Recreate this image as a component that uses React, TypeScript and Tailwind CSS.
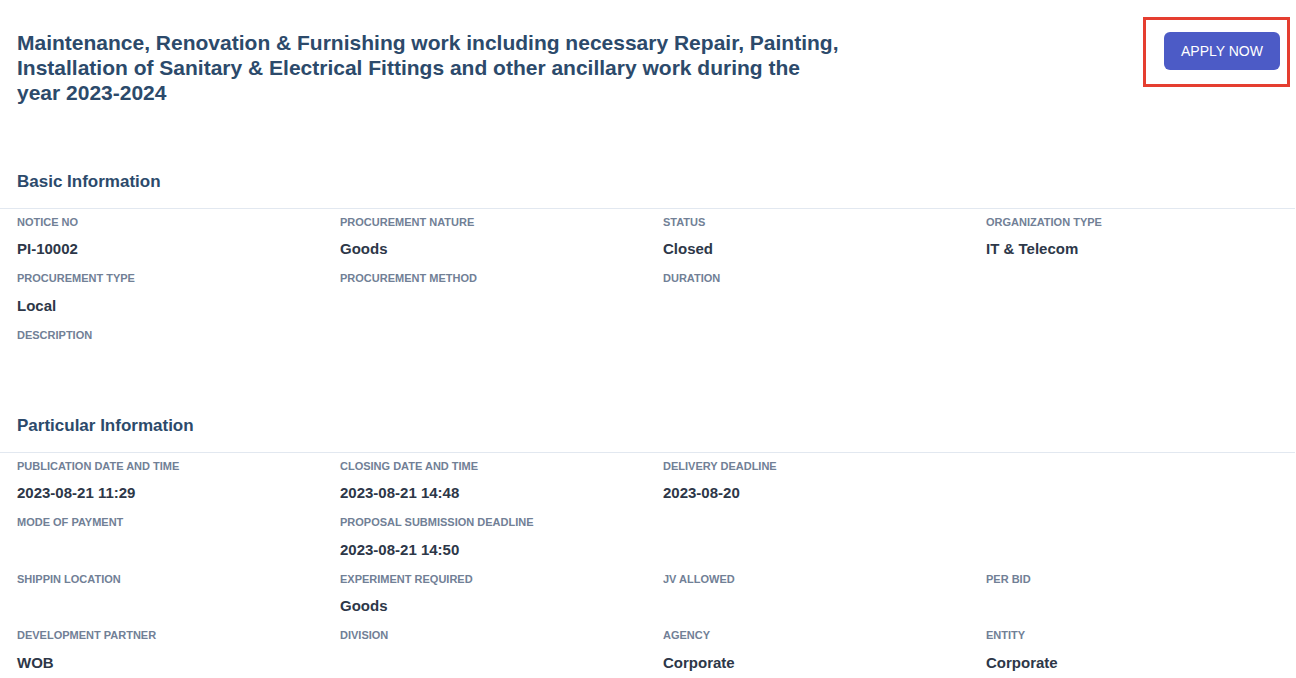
import React from 'react';

type Field = { label: string; value?: string };

const basicInfo: Field[] = [
  { label: 'Notice No', value: 'PI-10002' },
  { label: 'Procurement Nature', value: 'Goods' },
  { label: 'Status', value: 'Closed' },
  { label: 'Organization Type', value: 'IT & Telecom' },
  { label: 'Procurement Type', value: 'Local' },
  { label: 'Procurement Method' },
  { label: 'Duration' },
  { label: '' },
  { label: 'Description' },
];

const particularInfo: Field[] = [
  { label: 'Publication Date and Time', value: '2023-08-21 11:29' },
  { label: 'Closing Date and Time', value: '2023-08-21 14:48' },
  { label: 'Delivery Deadline', value: '2023-08-20' },
  { label: '' },
  { label: 'Mode of Payment' },
  { label: 'Proposal Submission Deadline', value: '2023-08-21 14:50' },
  { label: '' },
  { label: '' },
  { label: 'Shippin Location' },
  { label: 'Experiment Required', value: 'Goods' },
  { label: 'JV Allowed' },
  { label: 'Per Bid' },
  { label: 'Development Partner', value: 'WOB' },
  { label: 'Division' },
  { label: 'Agency', value: 'Corporate' },
  { label: 'Entity', value: 'Corporate' },
];

const InfoSection: React.FC<{ title: string; fields: Field[] }> = ({ title, fields }) => (
  <section>
    <h2 className="px-[17px] pb-[13.5px] text-[17px] leading-[24px] font-bold text-[#2c4a6b]">{title}</h2>
    <div className="w-[1295px] border-t border-[#e2e8f0] pt-[6px]">
      <div className="grid w-[1292px] grid-cols-4">
        {fields.map((f, i) => (
          <div key={i} className="h-[56.5px] px-[17px]">
            {f.label && (
              <>
                <div className="text-[11px] leading-[14px] font-bold uppercase text-[#718096]">{f.label}</div>
                <div className="mt-[10.5px] h-[20px] text-[15px] leading-[20px] font-bold text-[#2d3748]">{f.value}</div>
              </>
            )}
          </div>
        ))}
      </div>
    </div>
  </section>
);

export default function App() {
  return (
    <div className="min-h-screen bg-white font-['Liberation_Sans',Arial,sans-serif]">
      {/* header */}
      <div className="flex items-start justify-between pl-[17px] pr-[16px] pt-[30px]">
        <h1 className="w-[830px] text-[21px] leading-[25px] font-bold text-[#2c4a6b]">
          Maintenance, Renovation &amp; Furnishing work including necessary Repair, Painting, Installation of
          Sanitary &amp; Electrical Fittings and other ancillary work during the year 2023-2024
        </h1>
        <div className="relative mt-[2px]">
          <span className="pointer-events-none absolute -top-[15px] -bottom-[17px] -left-[21px] -right-[10px] border-[3px] border-[#e53e30]" />
          <button className="h-[38px] w-[116px] rounded-md bg-[#4c5bc6] text-[14px] text-white">APPLY NOW</button>
        </div>
      </div>

      <div className="mt-[65px]">
        <InfoSection title="Basic Information" fields={basicInfo} />
      </div>
      <div className="mt-[30px]">
        <InfoSection title="Particular Information" fields={particularInfo} />
      </div>
    </div>
  );
}
